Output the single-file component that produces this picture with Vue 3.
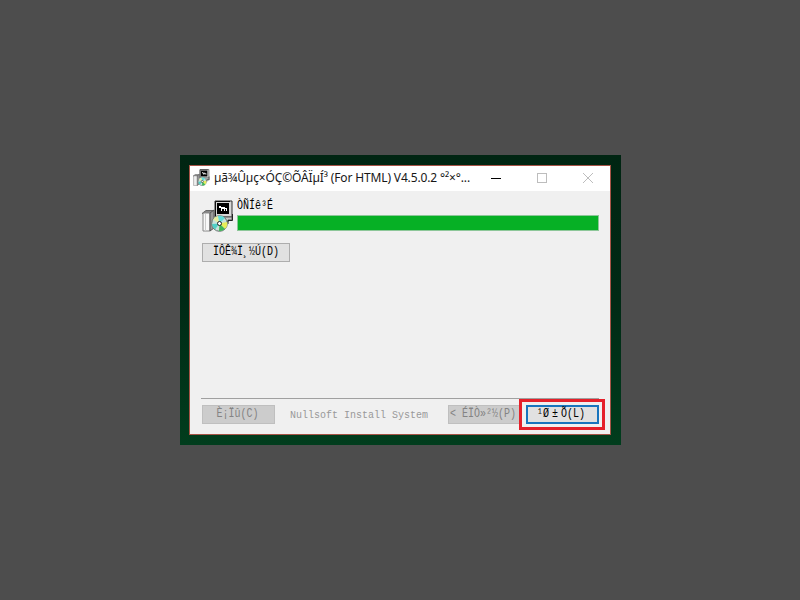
<script setup>
const title = 'µã¾Ûµç×ÓÇ©ÕÂÏµÍ³ (For HTML) V4.5.0.2 °²×°...'
</script>

<template>
  <main class="stage">
    <div class="desktop">
      <section class="window">
        <header class="titlebar">
          <svg class="app-icon" viewBox="0 0 32 32"><use href="#installer" /></svg>
          <h1>{{ title }}</h1>
          <div class="controls">
            <svg viewBox="0 0 12 12"><path d="M1 6.500H11" stroke="#000" /></svg>
            <svg viewBox="0 0 12 12"><rect x="1.500" y="1.500" width="9" height="9" fill="none" stroke="#bdbdbd" /></svg>
            <svg viewBox="0 0 12 12"><path d="M1 1L11 11M11 1L1 11" stroke="#bdbdbd" /></svg>
          </div>
        </header>
        <div class="content">
          <div class="status">
            <svg class="large-icon" viewBox="0 0 32 32">
              <g id="installer">
                <path d="M13 1H30V17H13Z" fill="#d8d8d8" stroke="#333" />
                <path d="M13.500 16V1.500H28" fill="none" stroke="#111" />
                <rect x="15" y="3" width="12" height="11" fill="#000" />
                <path d="M17 6H19V7H23V8H25V11H24V9H23V11H22V9H20V11H19V8H17Z" fill="#fff" />
                <path d="M14 17H30V20H26V22H14Z" fill="#c8c8c8" stroke="#555" />
                <path d="M30.500 14V20.500H26V24" fill="none" stroke="#222" />
                <path d="M0 13.500L4 10.500H12L8 13.500Z" fill="#888" stroke="#666" />
                <path d="M1 13H8V31H1Z" fill="#f8f8f8" stroke="#888" />
                <path d="M8 13L12 10V28L8 31Z" fill="#999" stroke="#555" />
                <path d="M3.500 14V31" stroke="#ccc" />
                <circle cx="17.500" cy="23.500" r="7.800" fill="#c8e2dc" stroke="#65736d" />
                <path d="M17.500 23.500L11 19.500A7.500 7.500 0 0 1 16 16Z" fill="#e6eda0" />
                <path d="M17.500 23.500L16 16A7.500 7.500 0 0 1 23 18Z" fill="#62dcd8" />
                <path d="M17.500 23.500L25 22A7.500 7.500 0 0 1 23 29Z" fill="#e8ee58" />
                <path d="M17.500 23.500L23 29A7.500 7.500 0 0 1 17 31Z" fill="#40b858" />
                <path d="M17.500 23.500L13 29.500A7.500 7.500 0 0 1 10 24Z" fill="#50cfc6" />
                <circle cx="17.500" cy="23.500" r="2" fill="#fff" stroke="#222" />
              </g>
            </svg>
            <div class="progress">
              <p><span class="cell-text">ÒÑÍê³É</span></p>
              <div class="bar"></div>
            </div>
          </div>
          <button class="details"><span class="cell-text">ÏÔÊ¾Ï¸½Ú(D)</span></button>
        </div>
        <footer>
          <button class="cancel" disabled><span class="cell-text">È¡Ïû(C)</span></button>
          <span class="brand">Nullsoft Install System</span>
          <button class="back" disabled><span class="cell-text">&lt; ÉÏÒ»²½(P)</span></button>
          <div class="highlight"><button class="close"><span class="cell-text">¹Ø<span class="wide">±</span>Õ(L)</span></button></div>
        </footer>
      </section>
    </div>
  </main>
</template>

<style>
body { margin: 0; background: #4d4d4d; }
</style>

<style scoped>
* { box-sizing: border-box; }
.stage { width: 800px; height: 600px; display: grid; padding: 155px 0 0 180px; align-content: start; background: #4d4d4d; }
.desktop { width: 441px; height: 290px; padding: 10px 10px 10px 9px; background: linear-gradient(#002512, #012a15 50%, #013d1d); }
.window { width: 422px; height: 270px; display: flex; flex-direction: column; border: 1px solid #a65346; background: #f0f0f0; }
.titlebar { height: 25px; flex: none; display: flex; align-items: center; background: #fff; }
.app-icon { width: 17px; height: 17px; margin: 0 0 2px 3px; }
h1 { width: 270px; margin: 0 0 1px 4px; color: #171717; font: 400 12px/24px "Noto Sans", sans-serif; letter-spacing: -.14px; white-space: nowrap; }
.controls { display: flex; gap: 34px; margin: 0 0 2px 6px; }
.controls svg { width: 12px; height: 12px; }
.content { flex: 1; padding: 8px 11px 0 12px; }
.status { display: flex; }
.large-icon { width: 32px; height: 34px; margin-right: 3px; }
.progress { width: 362px; }
p { margin: 0; padding-top: 2px; height: 16px; font: 10px/12px "Liberation Mono", monospace; color: #000; }
.cell-text { display: inline-block; transform: scaleY(1.2); }
.wide { display: inline-block; width: 12px; text-align: center; }
.bar { height: 16px; background: #06b025; border: 1px solid #8dc799; }
button { display: flex; justify-content: center; align-items: center; padding: 0; color: #000; background: #e1e1e1; border: 1px solid #adadad; border-radius: 0; font: 10px/12px "Liberation Mono", monospace; white-space: pre; }
.details { width: 88px; height: 19px; margin-top: 10px; }
footer { display: flex; height: 36px; margin-left: 11px; width: 398px; border-top: 1px solid #a0a0a0; }
.cancel { width: 73px; height: 19px; margin: 6px 0 0 1px; padding-right: 2px; flex: none; }
button:disabled { color: #838383; background: #ccc; border-color: #bfbfbf; }
.brand { width: 138px; height: 12px; flex: none; margin: 11px 0 0 15px; color: #999; font: 10px/12px "Liberation Mono", monospace; white-space: nowrap; transform: scaleY(1.12); }
.back { width: 72px; height: 19px; margin: 6px 0 0 20px; padding-right: 2px; flex: none; }
.highlight { width: 86px; height: 31px; flex: none; padding: 3px 3px 3px 4px; margin-left: -1px; border: 3px solid #e5202a; background: #f0f0f0; }
.close { width: 73px; height: 19px; padding-right: 3px; border: 2px solid #1874bd; }
</style>
